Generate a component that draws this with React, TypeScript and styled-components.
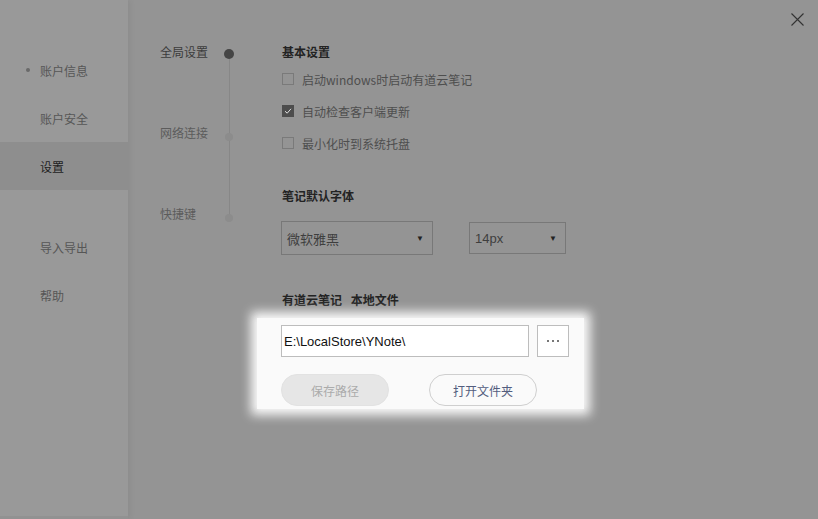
import React from "react";
import styled, { createGlobalStyle } from "styled-components";

const GlobalStyle = createGlobalStyle`
    html, body {
        margin: 0;
        padding: 0;
        background: #959595;
    }
    body {
        font-family: "Noto Sans CJK SC", "Liberation Sans", sans-serif;
    }
`;

const Window = styled.div`
    position: relative;
    display: flex;
    width: 818px;
    height: 519px;
    overflow: hidden;
    background: #949494;
`;

const Sidebar = styled.div`
    width: 128px;
    padding-top: 46px;
    background: #999999;
    box-shadow: 2px 0 6px rgba(0, 0, 0, 0.06);
    border-bottom: 3px solid #929292;
    box-sizing: border-box;
    z-index: 1;
`;

const NavItem = styled.div<{ $active?: boolean; $gap?: number }>`
    position: relative;
    height: 48px;
    margin-top: ${(p) => p.$gap || 0}px;
    padding-left: 40px;
    display: flex;
    align-items: center;
    font-size: 12px;
    color: ${(p) => (p.$active ? "#1e1e1e" : "#565656")};
    background: ${(p) => (p.$active ? "#8e8e8e" : "transparent")};
`;

const NavDot = styled.span`
    position: absolute;
    left: 26px;
    top: 22px;
    width: 4px;
    height: 4px;
    border-radius: 50%;
    background: #6a6a6a;
`;

const Main = styled.div`
    flex: 1;
    display: flex;
    padding-top: 42px;
`;

const Steps = styled.div`
    position: relative;
    margin-left: 32px;
    width: 122px;
    padding-top: 2px;
    display: flex;
    flex-direction: column;
    gap: 61px;

    &::before {
        content: "";
        position: absolute;
        left: 69px;
        top: 12px;
        width: 1px;
        height: 162px;
        background: #878787;
    }
`;

const Step = styled.div`
    display: flex;
    align-items: center;
    height: 20px;
`;

const StepLabel = styled.span<{ $active?: boolean }>`
    width: 64px;
    margin-top: -5px;
    font-size: 12px;
    color: ${(p) => (p.$active ? "#3c3c3c" : "#5c5c5c")};
`;

const StepDot = styled.span<{ $active?: boolean }>`
    position: relative;
    flex-shrink: 0;
    width: ${(p) => (p.$active ? 10 : 8)}px;
    height: ${(p) => (p.$active ? 10 : 8)}px;
    margin-left: ${(p) => (p.$active ? 0 : 1)}px;
    margin-top: ${(p) => (p.$active ? 0 : 3)}px;
    border-radius: 50%;
    background: ${(p) => (p.$active ? "#454545" : "#8c8c8c")};
`;

const Content = styled.div`
    display: flex;
    flex-direction: column;
`;

const Heading = styled.div<{ $top?: number }>`
    height: 20px;
    line-height: 20px;
    margin-top: ${(p) => p.$top || 0}px;
    font-size: 12px;
    font-weight: bold;
    color: #232323;
    word-spacing: 6px;
`;

const CheckList = styled.div`
    margin-top: 1px;
`;

const CheckRow = styled.label`
    height: 32px;
    display: flex;
    align-items: center;
    font-size: 12px;
    color: #4e4e4e;
`;

const Box = styled.span<{ $checked?: boolean }>`
    width: 12px;
    height: 12px;
    box-sizing: border-box;
    margin-right: 8px;
    border: 1px solid ${(p) => (p.$checked ? "#4d4d4d" : "#7a7a7a")};
    background: ${(p) => (p.$checked ? "#4d4d4d" : "transparent")};
    display: flex;
    align-items: center;
    justify-content: center;
`;

const SelectRow = styled.div`
    display: flex;
    align-items: flex-start;
    gap: 36px;
    margin-top: 15px;
    margin-left: -1px;
`;

const Select = styled.div<{ $w: number; $h: number; $top?: number }>`
    width: ${(p) => p.$w}px;
    height: ${(p) => p.$h}px;
    margin-top: ${(p) => p.$top || 0}px;
    box-sizing: border-box;
    border: 1px solid #787878;
    display: flex;
    align-items: center;
    justify-content: space-between;
    padding: 0 8px 0 5px;
    font-size: 13px;
    color: #3e3e3e;
    font-family: "Liberation Sans", "Noto Sans CJK SC", sans-serif;
`;

const Arrow = styled.span`
    font-size: 8px;
    color: #222;
`;

const Highlight = styled.div`
    margin: 8px 0 0 -25px;
    padding: 7px 14px 3px 25px;
    width: 288px;
    background: #fafafa;
    box-shadow: 0 0 10px 6px #fafafa;
`;

const PathRow = styled.div`
    display: flex;
    gap: 8px;
    margin-left: -1px;
`;

const PathInput = styled.div`
    width: 248px;
    height: 32px;
    box-sizing: border-box;
    border: 1px solid #bdbdbd;
    background: #fff;
    display: flex;
    align-items: center;
    padding-left: 2px;
    font-family: "Liberation Sans", sans-serif;
    font-size: 13px;
    color: #111;
`;

const MoreButton = styled.div`
    width: 32px;
    height: 32px;
    box-sizing: border-box;
    border: 1px solid #bdbdbd;
    background: #fff;
    display: flex;
    align-items: center;
    justify-content: center;
    gap: 3px;
`;

const Dot = styled.span`
    width: 2px;
    height: 2px;
    background: #777;
`;

const ButtonRow = styled.div`
    display: flex;
    gap: 40px;
    margin-top: 17px;
    margin-left: -1px;
`;

const Pill = styled.div<{ $disabled?: boolean }>`
    width: 108px;
    height: 32px;
    box-sizing: border-box;
    border-radius: 16px;
    border: 1px solid ${(p) => (p.$disabled ? "#e2e2e2" : "#cfcfcf")};
    background: ${(p) => (p.$disabled ? "#e6e6e6" : "#fafafa")};
    color: ${(p) => (p.$disabled ? "#ababab" : "#535d7e")};
    font-size: 12px;
    display: flex;
    align-items: center;
    justify-content: center;
`;

const Close = styled.div`
    position: absolute;
    top: 7px;
    right: 14px;
    width: 13px;
    height: 13px;
`;

const checks = [
    { label: "启动windows时启动有道云笔记", checked: false },
    { label: "自动检查客户端更新", checked: true },
    { label: "最小化时到系统托盘", checked: false },
];

const App = () => {
    return (
        <Window>
            <GlobalStyle />
            <Sidebar>
                <NavItem>
                    <NavDot />
                    账户信息
                </NavItem>
                <NavItem>账户安全</NavItem>
                <NavItem $active>设置</NavItem>
                <NavItem $gap={33}>导入导出</NavItem>
                <NavItem>帮助</NavItem>
            </Sidebar>
            <Main>
                <Steps>
                    <Step>
                        <StepLabel $active>全局设置</StepLabel>
                        <StepDot $active />
                    </Step>
                    <Step>
                        <StepLabel>网络连接</StepLabel>
                        <StepDot />
                    </Step>
                    <Step>
                        <StepLabel>快捷键</StepLabel>
                        <StepDot />
                    </Step>
                </Steps>
                <Content>
                    <Heading>基本设置</Heading>
                    <CheckList>
                        {checks.map((c) => (
                            <CheckRow key={c.label}>
                                <Box $checked={c.checked}>
                                    {c.checked && (
                                        <svg width="8" height="8" viewBox="0 0 8 8">
                                            <path d="M1 4.2 L3.2 6.2 L7 1.8" fill="none" stroke="#ddd" strokeWidth="1" />
                                        </svg>
                                    )}
                                </Box>
                                {c.label}
                            </CheckRow>
                        ))}
                    </CheckList>
                    <Heading $top={27}>笔记默认字体</Heading>
                    <SelectRow>
                        <Select $w={152} $h={34}>
                            微软雅黑
                            <Arrow>▼</Arrow>
                        </Select>
                        <Select $w={97} $h={32} $top={1}>
                            14px
                            <Arrow>▼</Arrow>
                        </Select>
                    </SelectRow>
                    <Heading $top={35}>有道云笔记 本地文件</Heading>
                    <Highlight>
                        <PathRow>
                            <PathInput>E:\LocalStore\YNote\</PathInput>
                            <MoreButton>
                                <Dot />
                                <Dot />
                                <Dot />
                            </MoreButton>
                        </PathRow>
                        <ButtonRow>
                            <Pill $disabled>保存路径</Pill>
                            <Pill>打开文件夹</Pill>
                        </ButtonRow>
                    </Highlight>
                </Content>
            </Main>
            <Close>
                <svg width="13" height="13" viewBox="0 0 13 13">
                    <path d="M0.5 0.5 L12.5 12.5 M12.5 0.5 L0.5 12.5" stroke="#333" strokeWidth="1.1" />
                </svg>
            </Close>
        </Window>
    );
};

export default App;
